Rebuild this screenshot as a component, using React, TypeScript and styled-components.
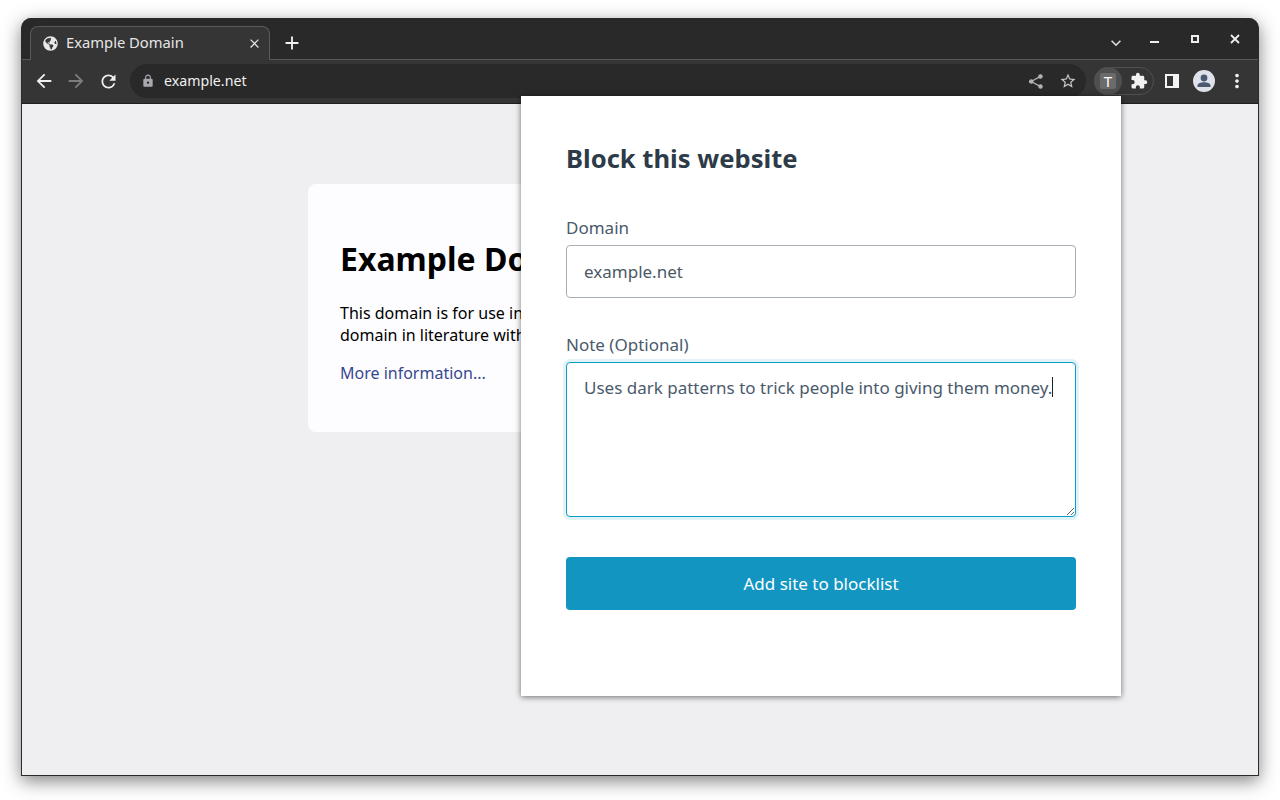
import React from "react";
import styled, { createGlobalStyle } from "styled-components";
import { FaGlobeAmericas } from "react-icons/fa";
import {
  MdArrowBack,
  MdArrowForward,
  MdRefresh,
  MdLock,
  MdStarBorder,
  MdExtension,
  MdMoreVert,
  MdClose,
  MdAdd,
  MdExpandMore,
} from "react-icons/md";

const Global = createGlobalStyle`
  html, body { margin: 0; padding: 0; background: #fff; }
  body { font-family: "Noto Sans", "Open Sans", sans-serif; width: 1280px; height: 800px; overflow: hidden; }
  * { box-sizing: border-box; }
`;

const Desktop = styled.div`
  width: 1280px;
  height: 800px;
  padding: 18px 21px 24px;
`;

const BrowserWindow = styled.div`
  position: relative;
  display: flex;
  flex-direction: column;
  width: 1238px;
  height: 758px;
  background: #292929;
  border: 1px solid #2a2a2a;
  border-top: 0;
  border-radius: 10px 10px 0 0;
  box-shadow: 0 5px 18px rgba(0, 0, 0, 0.5);
`;

const TabStrip = styled.div`
  display: flex;
  align-items: flex-end;
  height: 42px;
  padding-left: 8px;
  background: #292929;
  border-bottom: 1px solid #5a5a5a;
  border-radius: 10px 10px 0 0;
`;

const Tab = styled.div`
  position: relative;
  display: flex;
  align-items: center;
  width: 240px;
  height: 34px;
  margin-bottom: -1px;
  padding: 0 7px 0 12px;
  background: #353535;
  border: 1px solid #5a5a5a;
  border-bottom: 0;
  border-radius: 8px 8px 0 0;
  color: #e6e6e6;
  z-index: 1;
`;

const TabTitle = styled.span`
  flex: 1;
  margin: -3px 0 0 8px;
  font-size: 14.75px;
  line-height: 20px;
`;

const NewTab = styled.div`
  display: flex;
  margin: 0 0 5px 11px;
  color: #f2f2f2;
`;

const Spacer = styled.div`
  flex: 1;
`;

const WindowControls = styled.div`
  display: flex;
  align-self: flex-start;
  align-items: center;
  height: 42px;
  padding-right: 3px;
  color: #eee;
`;

const ControlSlot = styled.div<{ $w: number; $down?: number; $right?: number }>`
  display: flex;
  align-items: center;
  justify-content: center;
  width: ${(p) => p.$w}px;
  height: 42px;
  padding-top: ${(p) => p.$down ?? 0}px;
  padding-left: ${(p) => p.$right ?? 0}px;
`;

const Toolbar = styled.div`
  display: flex;
  align-items: center;
  height: 44px;
  background: #353535;
  border-bottom: 1px solid #1f1f1f;
  padding: 0 0 1px 11px;
`;

const NavButton = styled.div<{ $dim?: boolean }>`
  display: flex;
  align-items: center;
  justify-content: center;
  width: 22px;
  margin-right: 10px;
  color: ${(p) => (p.$dim ? "#7d7d7d" : "#f0f0f0")};
`;

const ReloadButton = styled.div`
  display: flex;
  width: 21px;
  margin: 0 11px 0 1px;
  color: #f0f0f0;
`;

const Omnibox = styled.div`
  display: flex;
  align-items: center;
  width: 956px;
  height: 34px;
  padding: 0 9px 0 11px;
  background: #292929;
  border-radius: 17px;
`;

const Url = styled.span`
  flex: 1;
  margin-left: 9px;
  font-size: 14.2px;
  line-height: 20px;
  color: #f0f0f0;
`;

const ShareSlot = styled.div`
  display: flex;
  margin-right: 16px;
`;

const StarSlot = styled.div`
  display: flex;
  color: #c8c8c8;
`;

const ExtensionPill = styled.div`
  display: flex;
  align-items: center;
  width: 60px;
  height: 28px;
  margin-left: 8px;
  border: 1px solid #505050;
  border-radius: 14px;
`;

const ActiveExtension = styled.div`
  display: flex;
  align-items: center;
  justify-content: center;
  width: 28px;
  height: 28px;
  margin: -1px 0 -1px -1px;
  background: #4f4f4f;
  border-radius: 50%;
`;

const TBadge = styled.div`
  width: 16px;
  height: 16px;
  background: #6b6b6b;
  border-radius: 2px;
  color: #fff;
  font-size: 15px;
  line-height: 16px;
  text-align: center;
`;

const PuzzleSlot = styled.div`
  display: flex;
  margin-left: 8px;
  color: #f2f2f2;
`;

const SideSlot = styled.div`
  display: flex;
  margin-left: 10px;
`;

const Avatar = styled.div`
  display: flex;
  margin-left: 13px;
`;

const MenuSlot = styled.div`
  display: flex;
  margin-left: 11px;
  color: #f0f0f0;
`;

const Content = styled.div`
  position: relative;
  flex: 1;
  padding-top: 80px;
  background: #efeff1;
`;

const Card = styled.div`
  width: 664px;
  height: 248px;
  margin-left: 286px;
  padding: 32px;
  background: #fdfdff;
  border-radius: 8px;
  color: #000;
`;

const CardTitle = styled.h1`
  margin: 21px 0 0;
  font-size: 32px;
  line-height: 44px;
  font-weight: 700;
  white-space: nowrap;
`;

const CardText = styled.p`
  margin: 21px 0 0;
  font-size: 16px;
  line-height: 22px;
  white-space: nowrap;
`;

const CardLink = styled.a`
  display: block;
  margin-top: 16px;
  font-size: 16px;
  line-height: 22px;
  color: #38488f;
`;

const Popup = styled.div`
  position: absolute;
  left: 499px;
  top: -8px;
  width: 600px;
  height: 600px;
  padding: 45px;
  background: #fff;
  box-shadow: 0 1px 6px rgba(0, 0, 0, 0.55);
`;

const PopupTitle = styled.h2`
  margin: 0;
  font-size: 25.6px;
  line-height: 36px;
  font-weight: 700;
  color: #2d3b48;
`;

const Label = styled.label`
  display: block;
  margin-bottom: 5px;
  font-size: 17px;
  line-height: 24px;
  color: #4a5a6c;
`;

const DomainField = styled.div`
  height: 53px;
  padding: 0 17px;
  border: 1px solid #a6adb5;
  border-radius: 4px;
  font-size: 17px;
  line-height: 52px;
  color: #4a5a66;
`;

const FirstGroup = styled.div`
  margin-top: 39px;
`;

const NoteGroup = styled.div`
  position: relative;
  margin-top: 35px;
`;

const NoteArea = styled.textarea`
  display: block;
  width: 510px;
  height: 155px;
  padding: 12px 17px;
  border: 1px solid #0d9cc6;
  border-radius: 4px;
  outline: none;
  box-shadow: 0 0 0 3px #e2f3f8;
  font: 17px/25px "Noto Sans", sans-serif;
  color: #4a5a6c;
  resize: vertical;
  overflow: hidden;
`;

const Caret = styled.span`
  position: absolute;
  left: 486px;
  top: 44px;
  width: 1px;
  height: 20px;
  background: #222;
`;

const SubmitButton = styled.button`
  display: block;
  width: 510px;
  height: 53px;
  margin-top: 40px;
  border: 0;
  border-radius: 4px;
  background: #1295c1;
  color: #fff;
  font: 17px "Noto Sans", sans-serif;
`;

export default function App() {
  return (
    <Desktop>
      <Global />
      <BrowserWindow>
        <TabStrip>
          <Tab>
            <FaGlobeAmericas size={15} color="#e8e8e8" />
            <TabTitle>Example Domain</TabTitle>
            <MdClose size={15} color="#e0e0e0" />
          </Tab>
          <NewTab>
            <MdAdd size={22} />
          </NewTab>
          <Spacer />
          <WindowControls>
            <ControlSlot $w={40} $down={8} $right={2}>
              <MdExpandMore size={20} color="#d8d8d8" />
            </ControlSlot>
            <ControlSlot $w={40} $down={5}>
              <svg width="10" height="4" viewBox="0 0 10 4">
                <rect y="1" width="9" height="2" fill="#eee" />
              </svg>
            </ControlSlot>
            <ControlSlot $w={40}>
              <svg width="10" height="10" viewBox="0 0 10 10">
                <path fillRule="evenodd" d="M1 1h8v8H1zM3 3v4h4V3z" fill="#eee" />
              </svg>
            </ControlSlot>
            <ControlSlot $w={40}>
              <svg width="10" height="10" viewBox="0 0 10 10">
                <path d="M1 1l8 8M9 1l-8 8" stroke="#eee" strokeWidth="1.8" />
              </svg>
            </ControlSlot>
          </WindowControls>
        </TabStrip>
        <Toolbar>
          <NavButton>
            <MdArrowBack size={22} />
          </NavButton>
          <NavButton $dim>
            <MdArrowForward size={22} />
          </NavButton>
          <ReloadButton>
            <MdRefresh size={21} />
          </ReloadButton>
          <Omnibox>
            <MdLock size={14} color="#a8a8b0" />
            <Url>example.net</Url>
            <ShareSlot>
              <svg width="14" height="15" viewBox="0 0 14 15" fill="#b4b4b4" stroke="#b4b4b4" strokeWidth="1.3">
                <circle cx="2.2" cy="7.5" r="1.6" />
                <circle cx="11.5" cy="2.4" r="1.6" />
                <circle cx="11.5" cy="12.6" r="1.6" />
                <path d="M2.2 7.5L11.5 2.4M2.2 7.5l9.3 5.1" fill="none" />
              </svg>
            </ShareSlot>
            <StarSlot>
              <MdStarBorder size={18} />
            </StarSlot>
          </Omnibox>
          <ExtensionPill>
            <ActiveExtension>
              <TBadge>T</TBadge>
            </ActiveExtension>
            <PuzzleSlot>
              <MdExtension size={18} />
            </PuzzleSlot>
          </ExtensionPill>
          <SideSlot>
            <svg width="16" height="16" viewBox="0 0 16 16">
              <path fillRule="evenodd" d="M1 1h14v14H1zM3 3v10h6V3z" fill="#f4f4f4" />
            </svg>
          </SideSlot>
          <Avatar>
            <svg width="22" height="22" viewBox="0 0 22 22">
              <circle cx="11" cy="11" r="11" fill="#dfe2ea" />
              <circle cx="11" cy="8" r="3.4" fill="#4a5a72" />
              <path d="M4.5 17v-1.6c0-2 3.6-3.2 6.5-3.2s6.5 1.2 6.5 3.2V17z" fill="#4a5a72" />
            </svg>
          </Avatar>
          <MenuSlot>
            <MdMoreVert size={22} />
          </MenuSlot>
        </Toolbar>
        <Content>
          <Card>
            <CardTitle>Example Domain</CardTitle>
            <CardText>
              This domain is for use in illustrative examples in documents. You may use this
              <br />
              domain in literature without prior coordination or asking for permission.
            </CardText>
            <CardLink>More information...</CardLink>
          </Card>
          <Popup>
            <PopupTitle>Block this website</PopupTitle>
            <FirstGroup>
              <Label>Domain</Label>
              <DomainField>example.net</DomainField>
            </FirstGroup>
            <NoteGroup>
              <Label>Note (Optional)</Label>
              <NoteArea readOnly defaultValue="Uses dark patterns to trick people into giving them money." />
              <Caret />
            </NoteGroup>
            <SubmitButton>Add site to blocklist</SubmitButton>
          </Popup>
        </Content>
      </BrowserWindow>
    </Desktop>
  );
}
